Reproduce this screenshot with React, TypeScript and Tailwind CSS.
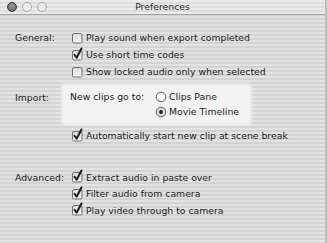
import React from 'react';

const stripes =
  'bg-[repeating-linear-gradient(to_bottom,#e3e3e3_0px,#e3e3e3_2px,#d3d3d3_2px,#d3d3d3_4px)]';

function CheckBox({ checked }: { checked?: boolean }) {
  return (
    <svg width="12" height="12" viewBox="0 0 12 12" className="mr-[3px] shrink-0 overflow-visible">
      <defs>
        <linearGradient id="cb" x1="0" y1="0" x2="0" y2="1">
          <stop offset="0" stopColor="#d8d8d8" />
          <stop offset="1" stopColor="#fafafa" />
        </linearGradient>
      </defs>
      <rect x="1.5" y="1.5" width="9.5" height="9.5" rx="1.5" fill="url(#cb)" stroke="#6f6f6f" strokeWidth="1" />
      {checked && (
        <path d="M3.5 5.8 L5.6 8.8 L10.5 -0.5" fill="none" stroke="#1e1e1e" strokeWidth="2" strokeLinecap="round" strokeLinejoin="round" />
      )}
    </svg>
  );
}

function Radio({ checked }: { checked?: boolean }) {
  return (
    <svg width="12" height="12" viewBox="0 0 12 12" className="mr-[2px] shrink-0">
      <circle cx="6" cy="6" r="4.8" fill={checked ? '#dcdcdc' : '#fbfbfb'} stroke="#5f5f5f" strokeWidth="1" />
      {checked && <circle cx="6" cy="6" r="1.9" fill="#1a1a1a" />}
    </svg>
  );
}

function Row({ checked, children }: { checked?: boolean; children: React.ReactNode }) {
  return (
    <div className="flex h-[17px] items-center">
      <CheckBox checked={checked} />
      <span>{children}</span>
    </div>
  );
}

export default function App() {
  return (
    <div
      className={`w-[327px] h-[243px] overflow-hidden border-r-2 border-[#bdbdbd] ${stripes} text-[9.3px] leading-none text-[#1c1c1c]`}
      style={{ fontFamily: '"DejaVu Sans", Verdana, sans-serif' }}
    >
      {/* title bar */}
      <div className="relative flex h-[15px] items-center border-b border-[#a4a4a4] bg-[repeating-linear-gradient(to_bottom,#ebebeb_0px,#ebebeb_2px,#dddddd_2px,#dddddd_4px)]">
        <div className="flex items-center gap-[5px] pl-[7px]">
          <span className="h-[10px] w-[10px] rounded-full border border-[#3c3c3c] bg-[radial-gradient(circle_at_50%_35%,#9a9a9a,#5a5a5a)]" />
          <span className="h-[10px] w-[10px] rounded-full border border-[#a6a6a6] bg-[#ececec]" />
          <span className="h-[10px] w-[10px] rounded-full border border-[#a6a6a6] bg-[#ececec]" />
        </div>
        <div className="absolute inset-x-0 text-center text-[#2a2a2a]">Preferences</div>
      </div>

      <div className="pl-[15px] pt-[14px]">
        {/* General */}
        <div className="flex">
          <div className="w-[56px] pt-[4px]">General:</div>
          <div>
            <Row>Play sound when export completed</Row>
            <Row checked>Use short time codes</Row>
            <Row>Show locked audio only when selected</Row>
          </div>
        </div>

        {/* Import */}
        <div className="mt-[5px] flex">
          <div className="w-[48px] pt-[8px]">Import:</div>
          <div className="w-[187px] rounded-[3px] bg-[#f3f3f3] py-[4px] pl-[7px] shadow-[0_0_3px_2px_#f0f0f0]">
            <div className="flex h-[15px] items-center">
              <span className="w-[85px]">New clips go to:</span>
              <Radio />
              <span>Clips Pane</span>
            </div>
            <div className="flex h-[15px] items-center pl-[85px]">
              <Radio checked />
              <span>Movie Timeline</span>
            </div>
          </div>
        </div>
        <div className="mt-[4px] pl-[56px]">
          <Row checked>Automatically start new clip at scene break</Row>
        </div>

        {/* Advanced */}
        <div className="mt-[25px] flex">
          <div className="w-[56px] pt-[4px]">Advanced:</div>
          <div className="[&>div]:h-[16.5px]">
            <Row checked>Extract audio in paste over</Row>
            <Row checked>Filter audio from camera</Row>
            <Row checked>Play video through to camera</Row>
          </div>
        </div>
      </div>
    </div>
  );
}
